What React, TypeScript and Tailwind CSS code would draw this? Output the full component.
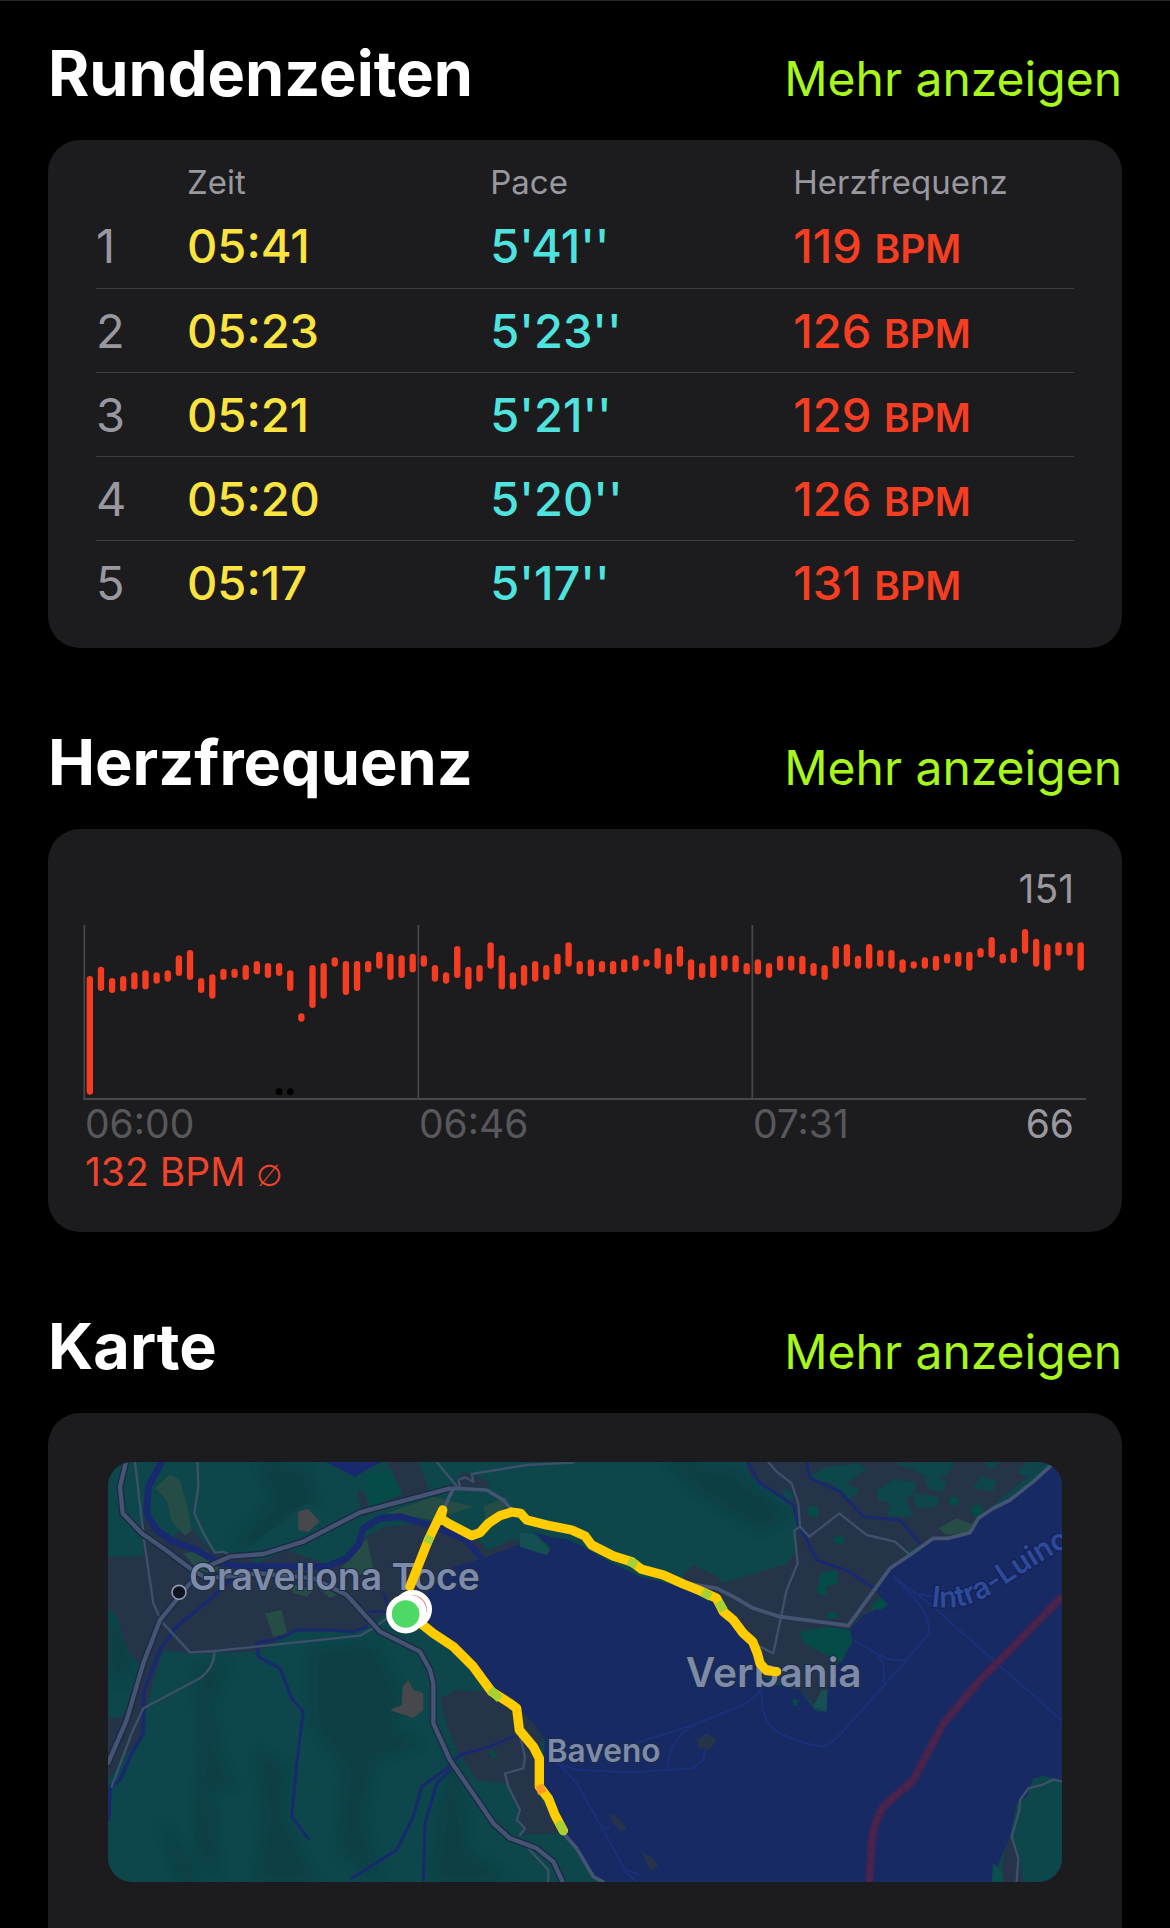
import React from "react";

const laps = [
  { time: "05:41", pace: "5'41''", bpm: 119 },
  { time: "05:23", pace: "5'23''", bpm: 126 },
  { time: "05:21", pace: "5'21''", bpm: 129 },
  { time: "05:20", pace: "5'20''", bpm: 126 },
  { time: "05:17", pace: "5'17''", bpm: 131 },
];

// Upper and lower end of each heart rate bar, in chart units from the top.
const bars: [number, number][] = [
  [153, 509], [125, 198], [159, 204], [153, 199], [142, 193], [136, 193], [142, 176], [136, 170], [91, 153], [75, 165],
  [159, 204], [148, 221], [131, 165], [131, 159], [120, 165], [108, 148], [114, 159], [114, 153], [136, 198], [265, 290],
  [120, 249], [114, 221], [97, 125], [108, 210], [108, 198], [108, 142], [80, 131], [86, 165], [91, 159], [86, 142],
  [91, 125], [120, 170], [142, 176], [63, 159], [125, 193], [120, 170], [52, 131], [91, 193], [142, 193], [120, 182],
  [108, 170], [120, 165], [86, 148], [52, 125], [108, 148], [103, 154], [108, 142], [108, 148], [103, 142], [91, 137],
  [103, 125], [69, 131], [86, 148], [63, 125], [103, 165], [114, 159], [91, 159], [91, 137], [91, 142], [114, 148],
  [103, 148], [114, 159], [92, 137], [92, 137], [92, 148], [114, 153], [120, 165], [63, 131], [57, 125], [92, 131],
  [57, 131], [75, 125], [75, 131], [103, 143], [109, 131], [97, 131], [92, 137], [86, 115], [80, 125], [80, 137],
  [69, 97], [36, 98], [86, 115], [69, 114], [12, 86], [41, 125], [57, 137], [52, 92], [52, 92], [52, 137],
];

function Section({ title, children, last = false }: { title: string; children: React.ReactNode; last?: boolean }) {
  return (
    <section className={last ? "flex grow flex-col" : "flex flex-col"}>
      <div className="mb-[21px] flex items-baseline justify-between leading-[80px]">
        <h2 className="text-[63px] font-bold text-white">{title}</h2>
        <a href="#" className="text-[48px] text-[#a8f71c]">
          Mehr anzeigen
        </a>
      </div>
      {children}
    </section>
  );
}

function LapTable() {
  return (
    <div className="rounded-[32px] bg-[#1c1c1e] px-12 pt-5 pb-6">
      <table className="w-full table-fixed border-collapse text-left">
        <colgroup>
          <col className="w-[91px]" />
          <col className="w-[31%]" />
          <col className="w-[31%]" />
          <col />
        </colgroup>
        <thead>
          <tr className="h-11 text-[33px] leading-[44px] text-[#98989e]">
            <td />
            <th scope="col" className="font-normal">Zeit</th>
            <th scope="col" className="font-normal">Pace</th>
            <th scope="col" className="font-normal">Herzfrequenz</th>
          </tr>
        </thead>
        <tbody>
          {laps.map((lap, i) => (
            <tr key={i} className="h-[84px] border-b border-[#3c3c3f] text-[47px] leading-none font-medium last:border-b-0">
              <th scope="row" className="font-normal text-[#98989e]">{i + 1}</th>
              <td className="text-[#fbe440]">{lap.time}</td>
              <td className="text-[#4fe3df]">{lap.pace}</td>
              <td className="text-[#f73e22]">
                {lap.bpm} <span className="text-[39px] font-semibold">BPM</span>
              </td>
            </tr>
          ))}
        </tbody>
      </table>
    </div>
  );
}

function HeartRateCard() {
  return (
    <div className="rounded-[32px] bg-[#1c1c1e] px-9 py-9 text-[39px] leading-[48px]">
      <div className="mb-3 pr-3 text-right text-[#98989e]">151</div>
      <svg viewBox="0 0 3006 525" className="block w-full overflow-visible" role="img" aria-label="Herzfrequenzverlauf">
        <path d="M1 0V522M1003 0V522M2005 0V522" stroke="#48484b" strokeWidth="5" />
        <path d="M-2 522H3006" stroke="#48484b" strokeWidth="6" />
        {bars.map(([top, bottom], i) => (
          <rect key={i} x={8 + i * 33.4} y={top} width="19" height={bottom - top} rx="9.5" fill="#f63c21" />
        ))}
        <circle cx="585" cy="500" r="10" fill="#000" />
        <circle cx="619" cy="500" r="10" fill="#000" />
      </svg>
      <div className="grid grid-cols-3 text-[#58585c]">
        <span className="pl-px">06:00</span>
        <span className="pl-px">06:46</span>
        <span className="flex justify-between pr-3 pl-px">
          07:31 <span className="text-[#98989e]">66</span>
        </span>
      </div>
      <div className="pl-px text-[#f0442c]">
        132 BPM <span className="font-['DejaVu_Sans',sans-serif] text-[30px] leading-none">∅</span>
      </div>
    </div>
  );
}

function RouteMap() {
  return (
    <svg viewBox="24 36 2862 1260" className="block w-full rounded-[24px]" role="img" aria-label="Karte der Laufstrecke">
      <defs>
        <filter id="soft" x="-20%" y="-20%" width="140%" height="140%">
          <feGaussianBlur stdDeviation="16" />
        </filter>
        <path id="ferryLabel" d="M2494 470C2590 482 2640 455 2710 408S2860 310 2980 250" />
      </defs>
      <rect x="24" y="36" width="2862" height="1260" fill="#0d464b" />

      {/* hill shading */}
      <g fill="#0a3b40" filter="url(#soft)" opacity=".6">
        <path d="M480 40L620 60 640 180 560 200 480 290 400 290 520 160Z" />
        <path d="M300 660L380 640 330 760 350 900 400 1010 330 1010 350 1290 290 1200 310 900Z" />
        <path d="M470 900L560 960 550 1100 640 1290 470 1290 500 1100Z" />
        <path d="M640 600L820 580 900 740 880 840 960 880 820 930 790 1100 830 1290 720 1200 740 960 640 820Z" />
        <path d="M180 1110L300 1290 240 1290Z" />
        <path d="M1700 40L1900 60 2060 200 1980 240 1780 110Z" />
        <path d="M1060 900L1100 1200 1220 1290 1000 1290Z" />
        <path d="M24 480L100 620 60 700 24 640Z" />
      </g>

      {/* built-up areas */}
      <g fill="#26344a">
        <path d="M24 320L130 320 130 200 200 270 270 230 340 310 420 310 470 340 560 300 700 350 760 310 770 280 850 230 990 220 1090 230 1200 330 1000 420 860 490 780 540 590 545 470 605 280 612 190 600 160 690 120 860 24 990V805L80 800 130 660 80 590 50 500 24 470Z" />
        <path d="M860 36H955L990 125 870 165 790 200 770 120 830 150 910 135Z" />
        <path d="M1020 745L1070 720 1170 725 1250 770 1330 850 1320 900 1310 1030 1350 1090 1380 1150 1270 1155 1260 1100 1220 1000 1130 990 1070 900 1040 820Z" />
        <path d="M1060 100L1090 65 1160 90 1170 110 1100 125Z" />
        <path d="M1140 315L1230 270 1290 275 1190 320Z" />
        <path d="M1940 36H2840L2630 205 2600 250 2430 300 2330 420 2370 430 2300 490 2250 540 2250 620 2200 700 2160 780 2100 720 1990 680 1960 590 1900 500 1830 430 1750 400V370L1780 345 1850 378 1870 400 1950 375 2030 350 2060 345 2090 300 2090 210 2070 150 1950 80Z" />
      </g>

      {/* the lake */}
      <path
        d="M1135 330L1200 305 1240 290 1290 275 1345 308 1350 290 1300 245 1350 260 1400 268 1450 290 1500 320 1560 350 1620 380 1700 400 1760 420 1840 460 1890 520 1940 570 1970 620 1985 680 2030 705 2100 720 2145 782 2178 785 2185 710 2215 640 2258 580 2250 540 2290 495 2360 465 2330 425 2370 355 2430 310 2500 265 2545 268 2612 250 2635 205 2680 175 2730 150 2800 95 2860 36H2886V1296H1500L1460 1240 1420 1180 1390 1150 1360 1090 1340 1040 1325 1010 1330 930 1335 870 1300 820 1260 780 1170 720 1120 650 1060 590 1000 540 960 510 960 450 1010 400 1060 350Z"
        fill="#172a63"
      />
      <path d="M2780 1040L2800 985 2830 978 2886 990V1296H2675L2700 1230 2730 1160 2750 1060Z" fill="#0d464b" />
      <path d="M2735 1150L2758 1220 2770 1296H2700L2715 1200Z" fill="#26344a" />
      <path d="M2680 1240L2705 1260 2710 1296H2675Z" fill="#0b5050" />

      {/* green patches between the houses */}
      <g fill="#0d464b">
        <path d="M2120 80L2180 50 2280 40 2300 60 2240 100 2280 120 2250 150 2190 100Z" />
        <path d="M2330 120L2380 90 2450 95 2440 130 2420 150 2440 200 2360 200 2370 160 2335 150Z" />
        <path d="M2380 40L2560 36 2550 70 2500 90 2440 60Z" />
        <path d="M2470 80L2540 90 2530 125 2490 120Z" />
        <path d="M2640 80L2690 90 2680 125 2620 115Z" />
        <path d="M2650 36H2700L2670 60Z M2780 36H2830L2790 80 2750 70Z" />
        <path d="M2440 130L2520 140 2510 170 2450 175Z" />
        <path d="M2050 115L2075 125 2080 160 2050 140Z" />
        <path d="M60 100L120 80 130 230 100 230Z M620 160L790 210 690 290 560 290 470 300 400 330 500 250Z" />
        <path d="M550 330L700 350 640 345Z" />
      </g>
      <g fill="#054b48">
        <path d="M790 75L875 60 905 135 805 175Z" />
        <path d="M2100 545L2180 530 2250 540 2255 570 2225 640 2150 600 2110 580Z" />
        <path d="M2160 370L2210 360 2215 400 2180 410 2180 440 2150 430Z" />
        <path d="M2310 470L2340 440 2365 465 2340 480Z" />
        <path d="M2120 180L2135 165 2155 175 2155 200 2130 200Z M2170 65L2190 70 2185 90 2168 80Z" />
        <path d="M2545 145L2575 140 2575 165 2550 165Z M2610 175L2640 160 2650 185 2625 205Z" />
        <path d="M2200 260L2235 260 2230 282 2205 280Z M2180 490L2210 485 2215 505 2180 505Z M2080 745L2096 750 2090 768 2078 764Z" />
        <path d="M1165 905L1180 900 1190 918 1178 928Z" />
      </g>
      <g fill="#254c45">
        <path d="M165 115L210 72 240 90 265 180 275 240 255 258 215 215 200 150Z" />
        <path d="M250 310L320 300 360 360 300 370Z" />
        <path d="M495 490L545 480 562 550 520 560Z" />
        <path d="M570 400L640 420 620 440 580 430Z M640 400L720 430 690 445Z" />
        <path d="M720 360L800 265 820 350 780 375Z" />
        <path d="M860 190L1000 140 1120 170 1000 210Z" />
        <path d="M1150 170L1220 140 1210 190 1160 220Z" />
        <path d="M1260 290L1260 250 1300 250 1350 300 1340 316Z" fill="#145052" />
        <path d="M2515 235L2570 205 2620 225 2605 250 2540 255Z" />
        <path d="M2140 770L2165 720 2182 720 2180 785Z" fill="#174f53" />
      </g>
      <g fill="#46484b">
        <path d="M595 185L625 176 660 215 625 245 595 240Z" />
        <path d="M925 690L940 720 970 730 970 780 940 804 870 780 905 765 908 710Z" />
      </g>
      <g fill="#26344a">
        <path d="M1790 870L1820 850 1850 870 1830 900 1795 890Z M1525 1090L1550 1100 1580 1135 1565 1145 1540 1120Z M1625 1205L1660 1225 1675 1250 1650 1260Z" />
      </g>

      {/* rivers */}
      <g fill="none" stroke="#19296f" strokeLinejoin="round" strokeLinecap="round">
        <path d="M185 36L145 110 140 190 170 240 220 275 290 300 350 335 420 350 560 350 680 350 740 325 775 285 790 235 840 205 900 200 990 225 1100 270 1140 320" strokeWidth="20" />
        <path d="M680 36H840L765 78Z" fill="#19296f" strokeWidth="2" />
        <path d="M400 380L340 440 230 530 180 600 130 730 130 850 90 920 60 990 30 1010 26 1110" strokeWidth="11" />
        <path d="M800 530L760 545 680 540 590 540 540 565 470 580 475 620 540 655 575 745 610 785 590 940 575 1100 625 1165" strokeWidth="9" />
        <path d="M755 1285L890 1200 940 1100 965 1010 1040 955 1080 915 1170 890 1240 860M970 1290L975 1120 1010 1000 1050 960" strokeWidth="9" />
        <path d="M810 485H870L850 430" strokeWidth="8" />
        <path d="M1945 40L1975 95 2080 165 2095 220 2150 330 2250 365 2320 415M2120 40L2130 85 2220 125 2290 200 2400 210 2460 280" strokeWidth="9" />
      </g>

      {/* ferry lines and the border */}
      <g fill="none" stroke="#1b3079" strokeWidth="6">
        <path d="M1370 940L1430 960 1600 967 1780 955 1810 930 1815 900M1590 885L1780 825 1930 765 1975 730 1985 700M1705 950Q1700 880 1780 825M1380 945L1430 1000 1510 1140 1580 1270 1610 1296M1510 1140L1530 1130M1580 1260L1620 1275" />
        <path d="M1985 720Q1980 820 2040 850T2170 890Q2200 880 2250 820L2420 630 2488 550Q2490 500 2440 440L2380 380 2500 470 2600 560 2886 812M2260 570L2330 610Q2370 635 2420 630M2330 610Q2360 640 2350 700M2440 430L2500 440" />
      </g>
      <path d="M2886 440L2730 600 2640 690 2530 820 2440 990 2350 1070Q2320 1120 2315 1180L2308 1296" fill="none" stroke="#3f2453" strokeWidth="26" />
      <path d="M2886 440L2730 600 2640 690 2530 820 2440 990 2350 1070Q2320 1120 2315 1180L2308 1296" fill="none" stroke="#4f2449" strokeWidth="12" strokeDasharray="30 6" />

      {/* roads */}
      <g fill="none" strokeLinejoin="round" strokeLinecap="round">
        <g stroke="#3d506a" strokeWidth="7">
          <path d="M105 36L135 290 160 460 185 515 270 607 345 603 780 557 820 535 860 505M343 603Q345 650 300 685L130 775 95 850 35 1010" />
          <path d="M292 36L295 110 283 190 310 250 345 308 370 305 400 320" />
          <path d="M1010 36L1070 108M1080 110L1075 90 1095 82 1120 95 1115 72 1280 45 1420 38" />
          <path d="M2005 36L2030 65 2075 100 2095 160 2100 230 2083 242 2093 340 2060 420 2020 610 1980 590M2100 230L2128 260 2218 190 2300 255 2385 275 2430 315" />
          <path d="M1260 860L1275 920 1270 955 1215 970 1225 1010 1260 1080 1250 1110 1275 1135 1260 1155M1280 1190L1345 1260 1345 1296" />
          <path d="M2886 995L2862 988 2825 1005 2785 1015 2760 1050 2758 1080 2735 1160 2755 1225 2750 1296" />
        </g>
        <path d="M78 36L60 110 68 190 125 250 190 295 270 355 320 385 480 370 640 385 740 435 840 545 960 605 990 660 1000 700 1000 820 1050 930 1180 1120 1230 1165 1310 1195 1360 1235 1388 1296M320 350L390 320 490 312 610 275 780 187 1050 115M270 400L180 510 130 640 80 810 24 940" stroke="#1c2a42" strokeWidth="21" />
        <path d="M78 36L60 110 68 190 125 250 190 295 270 355 320 385 480 370 640 385 740 435 840 545 960 605 990 660 1000 700 1000 820 1050 930 1180 1120 1230 1165 1310 1195 1360 1235 1388 1296M320 350L390 320 490 312 610 275 780 187 1050 115M270 400L180 510 130 640 80 810 24 940" stroke="#445472" strokeWidth="13" />
        <path d="M1030 180L1060 115 1160 120 1210 150 1235 180M1700 390L1850 415 1900 440 1960 475 2040 500 2245 527 2370 355 2430 315 2500 265 2545 265 2610 248 2635 205 2680 175 2730 150 2800 95 2860 40M1390 1150L1430 1195 1480 1280 1510 1296" stroke="#445472" strokeWidth="11" />
      </g>

      {/* place names */}
      <g fontFamily="Inter, sans-serif" fill="#7d8ba8" stroke="#1d2b45" strokeWidth="6" paintOrder="stroke" fontWeight="600">
        <text x="267" y="420" fontSize="112">Gravellona Toce</text>
        <text x="1757" y="710" fontSize="122">Verbania</text>
        <text x="1340" y="937" fontSize="95">Baveno</text>
        <text fontSize="88" fill="#2e4a9c" stroke="#142457" strokeWidth="8">
          <textPath href="#ferryLabel">Intra-Luino</textPath>
        </text>
      </g>
      <circle cx="237" cy="427" r="21" fill="#0f141f" stroke="#8b98b0" strokeWidth="5" />

      {/* the run */}
      <g fill="none" stroke="#ffcc00" strokeWidth="28" strokeLinejoin="round" strokeLinecap="round">
        <path d="M930 410L985 270 1028 180 1022 205 1045 220 1115 257 1140 248 1165 220 1200 197 1235 186 1262 190 1280 210 1340 225 1415 240 1455 258 1475 285 1540 318 1595 335 1625 358 1690 375 1750 402 1800 422 1850 445 1870 485 1900 510 1930 550 1958 575 1972 610 1980 640 2000 662 2030 665" />
        <path d="M950 510L1000 550 1060 590 1120 650 1175 725 1230 760 1250 775 1258 840 1300 890 1318 925 1318 1010 1345 1045 1365 1095 1390 1142" />
      </g>
      <g fill="none" stroke="#a8d032" strokeWidth="26">
        <path d="M982 280L992 258M1585 333L1610 345M1807 426L1832 440M1856 455L1872 482M1170 718L1200 747" />
        <path d="M1380 1125L1390 1142" strokeLinecap="round" />
        <path d="M1318 1005L1327 1030" stroke="#ff9a1f" />
      </g>
      <circle cx="938" cy="478" r="50" fill="#d6494b" stroke="#fff" strokeWidth="16" />
      <circle cx="933" cy="482" r="46" fill="#fff" />
      <circle cx="917" cy="492" r="50" fill="#4cd964" stroke="#fff" strokeWidth="17" />
    </svg>
  );
}

export default function App() {
  return (
    <main className="flex min-h-screen flex-col gap-[74px] border-t border-[#29292b] bg-black px-12 pt-8 font-['Inter',sans-serif]">
      <Section title="Rundenzeiten">
        <LapTable />
      </Section>
      <Section title="Herzfrequenz">
        <HeartRateCard />
      </Section>
      <Section title="Karte" last>
        <div className="grow rounded-t-[32px] bg-[#1c1c1e] px-[60px] pt-[49px]">
          <RouteMap />
        </div>
      </Section>
    </main>
  );
}
